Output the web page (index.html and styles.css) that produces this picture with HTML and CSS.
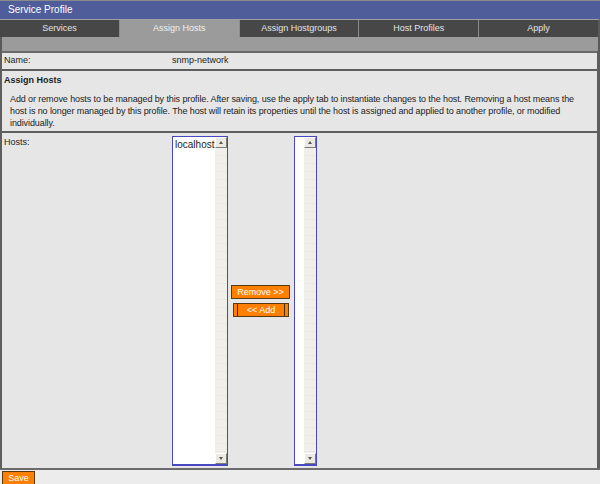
FILE: index.html
```html
<!DOCTYPE html>
<html>
<head>
<meta charset="utf-8">
<link rel="stylesheet" href="styles.css">
</head>
<body>
<div class="page">
  <div class="titlebar">Service Profile</div>
  <div class="tabs">
    <div class="tab">Services</div>
    <div class="tab active">Assign Hosts</div>
    <div class="tab">Assign Hostgroups</div>
    <div class="tab">Host Profiles</div>
    <div class="tab">Apply</div>
  </div>
  <div class="substrip"></div>
  <div class="content">
    <div class="row name-row">
      <span class="label">Name:</span>
      <span class="value">snmp-network</span>
    </div>
    <div class="row section">
      <div class="heading">Assign Hosts</div>
      <p class="desc">Add or remove hosts to be managed by this profile. After saving, use the apply tab to instantiate changes to the host. Removing a host means the host is no longer managed by this profile. The host will retain its properties until the host is assigned and applied to another profile, or modified individually.</p>
    </div>
    <div class="row hosts-row">
      <span class="label hosts-label">Hosts:</span>
      <div class="listbox list-wide">
        <div class="items"><div class="item">localhost</div></div>
        <div class="scrollbar">
          <div class="arrow up"></div>
          <div class="track"></div>
          <div class="arrow down"></div>
        </div>
      </div>
      <div class="movers">
        <button class="btn remove">Remove &gt;&gt;</button>
        <button class="btn add">&lt;&lt; Add</button>
      </div>
      <div class="listbox list-narrow">
        <div class="items"></div>
        <div class="scrollbar">
          <div class="arrow up"></div>
          <div class="track"></div>
          <div class="arrow down"></div>
        </div>
      </div>
    </div>
  </div>
  <div class="footer">
    <button class="btn save">Save</button>
  </div>
</div>
</body>
</html>
```

FILE: styles.css
```css
html, body {
  margin: 0;
  padding: 0;
  background: #ececec;
}
body {
  font-family: "Liberation Sans", Arial, sans-serif;
  font-size: 9px;
  color: #222;
}
.page {
  width: 600px;
  height: 484px;
  display: flex;
  flex-direction: column;
  overflow: hidden;
}
.titlebar {
  height: 18px;
  border-top: 1px solid #8a8a8a;
  background: #4f5e9b;
  color: #fff;
  font-size: 10px;
  line-height: 18px;
  padding-left: 8px;
}
.tabs {
  display: flex;
  height: 17px;
  border-top: 1px solid #a0a0a0;
  background: #474747;
  border-right: 2px solid #5a5a5a;
}
.tab {
  flex: 1;
  text-align: center;
  color: #e4e4e4;
  line-height: 17px;
  border-left: 1px solid #8c8c8c;
}
.tab:first-child {
  border-left: 0;
}
.tab.active {
  background: #9b9b9b;
  color: #f0f0f0;
}
.substrip {
  height: 14px;
  background: #9b9b9b;
  border-right: 2px solid #5a5a5a;
  border-left: 2px solid #5a5a5a;
}
.content {
  flex: 1;
  display: flex;
  flex-direction: column;
  border-left: 2px solid #5e5e5e;
  border-right: 3px solid #5e5e5e;
}
.row {
  background: #e6e6e6;
  border-top: 2px solid #5e5e5e;
}
.name-row {
  display: flex;
  height: 16px;
  line-height: 15px;
  border-top: 2px solid #6a6a6a;
}
.label {
  width: 168px;
  padding-left: 2px;
  flex: none;
}
.value {
  color: #222;
}
.section {
  height: 62px;
  padding: 4px 0 0 2px;
  box-sizing: border-box;
}
.heading {
  font-weight: bold;
  line-height: 11px;
}
.desc {
  margin: 7px 6px 0 6px;
  line-height: 12px;
  letter-spacing: -0.1px;
}
.hosts-row {
  flex: 1;
  display: flex;
  align-items: stretch;
  padding: 3px 0 2px 0;
}
.hosts-label {
  line-height: 12px;
}
.listbox {
  display: flex;
  background: #fff;
  border: 1px solid #4848c0;
  border-bottom-width: 2px;
}
.list-wide {
  width: 54px;
}
.list-narrow {
  width: 21px;
}
.items {
  flex: 1;
  padding: 2px 0 0 2px;
  font-size: 10px;
  line-height: 12px;
  color: #222;
}
.scrollbar {
  width: 12px;
  display: flex;
  flex-direction: column;
  background: #efede6;
}
.track {
  flex: 1;
  background: repeating-linear-gradient(#f1efe9 0 7px, #ebe8e0 7px 8px);
}
.arrow {
  height: 11px;
  box-sizing: border-box;
  background: #ece9e0;
  border: 1px solid;
  border-color: #fff #7a7a7a #7a7a7a #fff;
  position: relative;
}
.arrow::after {
  content: "";
  position: absolute;
  left: 3px;
  width: 0;
  height: 0;
  border-left: 2px solid transparent;
  border-right: 2px solid transparent;
}
.arrow.up::after {
  top: 3px;
  border-bottom: 3px solid #555;
}
.arrow.down::after {
  top: 3px;
  border-top: 3px solid #555;
}
.movers {
  width: 66px;
  display: flex;
  flex-direction: column;
  align-items: center;
  justify-content: center;
  gap: 4px;
}
.btn {
  font-family: "Liberation Sans", Arial, sans-serif;
  font-size: 9px;
  color: #fff;
  background: #ff8000;
  border: 1px solid #5a3a10;
  height: 14px;
  padding: 0;
  margin: 0;
  line-height: 12px;
}
.remove {
  width: 59px;
  margin-left: -1px;
}
.add {
  width: 56px;
  box-shadow: inset 3px 0 0 #ff8000, inset 4px 0 0 #3a2a10, inset -3px 0 0 #ff8000, inset -4px 0 0 #3a2a10;
}
.footer {
  height: 16px;
  border-top: 2px solid #6a6a6a;
  background: #ececec;
  padding: 1px 0 0 2px;
  box-sizing: border-box;
}
.save {
  width: 33px;
  height: 14px;
}
```
